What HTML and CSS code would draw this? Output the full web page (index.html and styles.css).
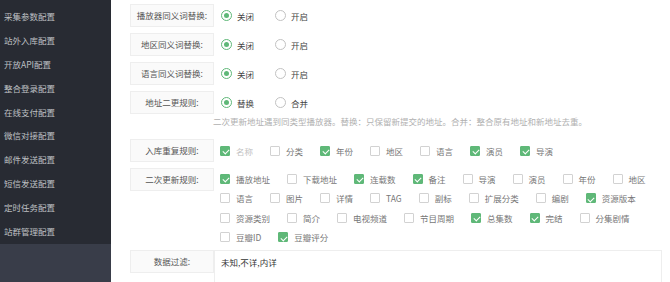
FILE: index.html
```html
<!DOCTYPE html>
<html lang="zh-CN">
<head>
  <meta charset="UTF-8" />
  <title>采集参数配置</title>
  <link rel="stylesheet" href="styles.css">
</head>
<body>
  <div class="layout">
    <aside class="side">
      <ul class="side-menu">
        <li class="active">采集参数配置</li>
        <li>站外入库配置</li>
        <li>开放API配置</li>
        <li>整合登录配置</li>
        <li>在线支付配置</li>
        <li>微信对接配置</li>
        <li>邮件发送配置</li>
        <li>短信发送配置</li>
        <li>定时任务配置</li>
        <li>站群管理配置</li>
      </ul>
    </aside>

    <main class="content">
      <form class="config-form">
        <div class="form-item">
          <label class="form-label">播放器同义词替换:</label>
          <div class="form-block">
            <span class="radio checked"><i></i>关闭</span>
            <span class="radio"><i></i>开启</span>
          </div>
        </div>
        <div class="form-item">
          <label class="form-label">地区同义词替换:</label>
          <div class="form-block">
            <span class="radio checked"><i></i>关闭</span>
            <span class="radio"><i></i>开启</span>
          </div>
        </div>
        <div class="form-item">
          <label class="form-label">语言同义词替换:</label>
          <div class="form-block">
            <span class="radio checked"><i></i>关闭</span>
            <span class="radio"><i></i>开启</span>
          </div>
        </div>
        <div class="form-item form-item-tight">
          <label class="form-label">地址二更规则:</label>
          <div class="form-block">
            <span class="radio checked"><i></i>替换</span>
            <span class="radio"><i></i>合并</span>
          </div>
        </div>
        <div class="form-aux">二次更新地址遇到同类型播放器。替换：只保留新提交的地址。合并：整合原有地址和新地址去重。</div>

        <div class="form-item">
          <label class="form-label">入库重复规则:</label>
          <div class="form-block check-list">
            <span class="check checked disabled"><i></i>名称</span>
            <span class="check"><i></i>分类</span>
            <span class="check checked"><i></i>年份</span>
            <span class="check"><i></i>地区</span>
            <span class="check"><i></i>语言</span>
            <span class="check checked"><i></i>演员</span>
            <span class="check checked"><i></i>导演</span>
          </div>
        </div>

        <div class="form-item form-item-multi">
          <label class="form-label">二次更新规则:</label>
          <div class="form-block check-list">
            <span class="check checked"><i></i>播放地址</span>
            <span class="check"><i></i>下载地址</span>
            <span class="check checked"><i></i>连载数</span>
            <span class="check checked"><i></i>备注</span>
            <span class="check"><i></i>导演</span>
            <span class="check"><i></i>演员</span>
            <span class="check"><i></i>年份</span>
            <span class="check"><i></i>地区</span>
            <span class="check"><i></i>语言</span>
            <span class="check"><i></i>图片</span>
            <span class="check"><i></i>详情</span>
            <span class="check"><i></i>TAG</span>
            <span class="check"><i></i>副标</span>
            <span class="check"><i></i>扩展分类</span>
            <span class="check"><i></i>编剧</span>
            <span class="check checked"><i></i>资源版本</span>
            <span class="check"><i></i>资源类别</span>
            <span class="check"><i></i>简介</span>
            <span class="check"><i></i>电视频道</span>
            <span class="check"><i></i>节目周期</span>
            <span class="check checked"><i></i>总集数</span>
            <span class="check checked"><i></i>完结</span>
            <span class="check"><i></i>分集剧情</span>
            <span class="check"><i></i>豆瓣ID</span>
            <span class="check checked"><i></i>豆瓣评分</span>
          </div>
        </div>

        <div class="form-item">
          <label class="form-label">数据过滤:</label>
          <div class="form-block form-block-input">
            <textarea class="textarea">未知,不详,内详</textarea>
          </div>
        </div>
      </form>
    </main>
  </div>
</body>
</html>
```

FILE: styles.css
```css
html, body {
  margin: 0;
  height: 100%;
  overflow: hidden;
  font-family: "Noto Sans CJK SC", "Noto Sans", sans-serif;
  font-size: 8.5px;
  color: #333;
  background: #fff;
}
.layout {
  display: flex;
  height: 100%;
}
.side {
  width: 111px;
  flex-shrink: 0;
  background: #393d49;
}
.side-menu {
  list-style: none;
  margin: 0;
  padding: 5px 0 0;
  background: #282b33;
}
.side-menu li {
  height: 23.9px;
  line-height: 23.9px;
  padding-left: 4px;
  color: #bfc0c3;
  white-space: nowrap;
}
.content {
  flex: 1;
  padding: 4px 9px 0 19px;
  overflow: hidden;
}
.form-item {
  display: flex;
  margin-bottom: 6px;
}
.form-item-tight {
  margin-bottom: 0;
}
.form-item-multi {
  margin-bottom: 3px;
}
.form-label {
  width: 84px;
  height: 23px;
  flex-shrink: 0;
  box-sizing: border-box;
  border: 1px solid #eee;
  background: #fafafa;
  line-height: 21px;
  text-align: center;
  color: #555;
  white-space: nowrap;
}
.form-block {
  display: flex;
  align-items: center;
  flex: 1;
  padding-left: 7px;
  height: 23px;
}
.radio {
  display: flex;
  align-items: center;
  gap: 5px;
  margin-right: 21px;
  color: #444;
}
.radio i {
  width: 11px;
  height: 11px;
  box-sizing: border-box;
  border: 1px solid #c2c2c2;
  border-radius: 50%;
  position: relative;
}
.radio.checked i {
  border-color: #5fb878;
}
.radio.checked i::after {
  content: "";
  position: absolute;
  left: 2px;
  top: 2px;
  width: 5px;
  height: 5px;
  border-radius: 50%;
  background: #5fb878;
}
.form-aux {
  padding-left: 83px;
  line-height: 14px;
  height: 14px;
  margin-bottom: 11px;
  color: #b0b0b0;
  white-space: nowrap;
}
.check-list {
  flex-wrap: wrap;
  column-gap: 17px;
  padding-left: 6px;
  align-content: flex-start;
}
.form-item-multi .check-list {
  height: auto;
  padding-top: 1px;
}
.check {
  display: flex;
  align-items: center;
  gap: 6px;
  height: 19.5px;
  color: #777;
  white-space: nowrap;
}
.form-item:not(.form-item-multi) .check {
  height: 23px;
}
.check i {
  width: 10px;
  height: 10px;
  box-sizing: border-box;
  border: 1px solid #d2d2d2;
  border-radius: 1px;
  background: #fff;
  position: relative;
}
.check.checked i {
  border-color: #5fb878;
  background: #5fb878;
}
.check.checked i::after {
  content: "";
  position: absolute;
  left: 2.5px;
  top: 1.5px;
  width: 3px;
  height: 5px;
  border: solid #fff;
  border-width: 0 1px 1px 0;
  transform: rotate(45deg);
}
.check.disabled {
  color: #c2c2c2;
}
.form-block-input {
  padding-left: 0;
  align-items: flex-start;
  height: auto;
}
.textarea {
  width: 448px;
  height: 40px;
  box-sizing: border-box;
  border: 1px solid #eee;
  padding: 5px 6px;
  font-family: inherit;
  font-size: 8.5px;
  line-height: 12px;
  color: #333;
  resize: none;
  outline: none;
}
```
